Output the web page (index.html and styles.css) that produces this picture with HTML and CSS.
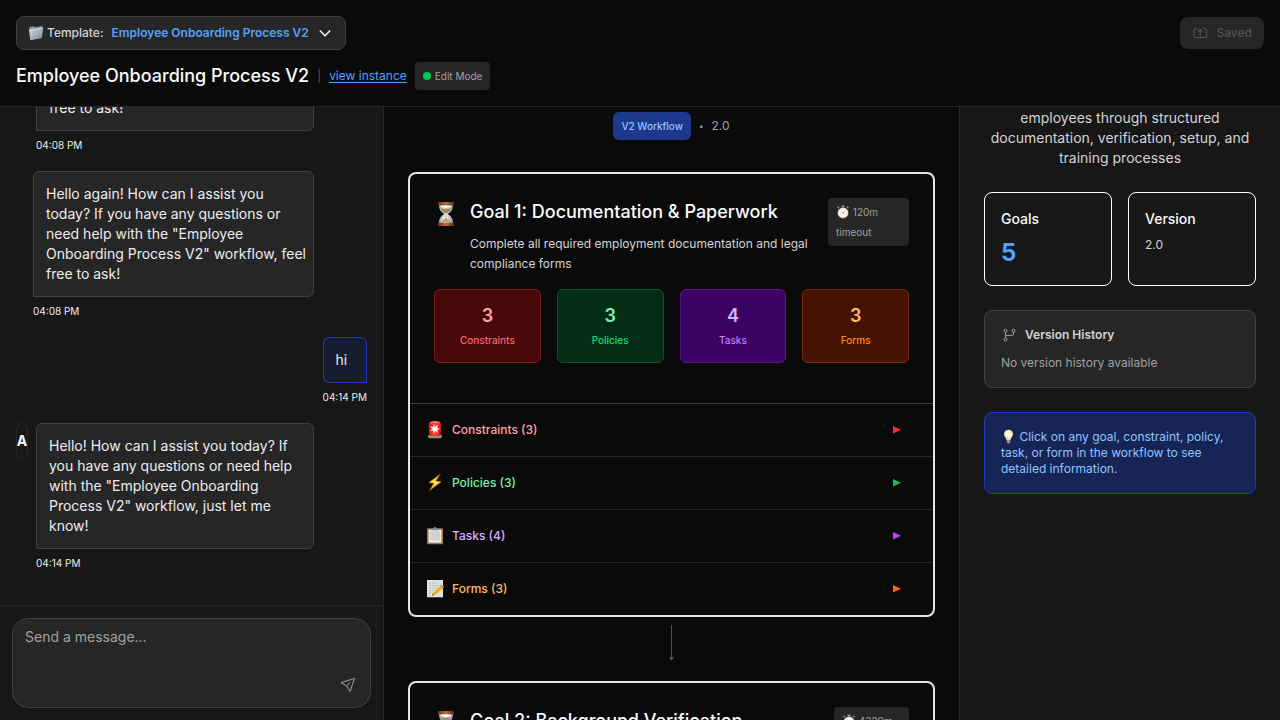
FILE: index.html
```html
<!DOCTYPE html>
<html lang="en">
<head>
<meta charset="utf-8">
<title>Employee Onboarding Process V2</title>
<link rel="stylesheet" href="styles.css">
</head>
<body>
<svg class="defs" aria-hidden="true">
  <defs>
    <linearGradient id="g-folder" x1="0" y1="0" x2="1" y2="1"><stop offset="0" stop-color="#d5dade"/><stop offset="1" stop-color="#7f878e"/></linearGradient>
    <linearGradient id="g-wood" x1="0" x2="1"><stop offset="0" stop-color="#6b341a"/><stop offset=".5" stop-color="#c06a38"/><stop offset="1" stop-color="#5b2b16"/></linearGradient>
    <linearGradient id="g-glass" x1="0" x2="1"><stop offset="0" stop-color="#8fa0b5"/><stop offset=".5" stop-color="#fff"/><stop offset="1" stop-color="#8492a6"/></linearGradient>
    <linearGradient id="g-red" x1="0" x2="1"><stop offset="0" stop-color="#c3161a"/><stop offset=".5" stop-color="#ff4a3d"/><stop offset="1" stop-color="#b90f16"/></linearGradient>
    <linearGradient id="g-bolt" x1="0" y1="0" x2="0" y2="1"><stop offset="0" stop-color="#f79a00"/><stop offset=".5" stop-color="#ffe14a"/><stop offset="1" stop-color="#f08a00"/></linearGradient>
    <radialGradient id="g-bulb"><stop offset="0" stop-color="#fff"/><stop offset=".6" stop-color="#fff8d0"/><stop offset="1" stop-color="#eadf9b"/></radialGradient>
    <symbol id="folder" viewBox="0 0 16 16">
      <path d="M.2 3.200.8 2l4.600-.7 1 .9L13.400 1l.3 1.600-1.200 10.200L1.200 15z" fill="#8f979d"/>
      <path d="M0 5.200 14.200 3l-1.300 10.100L1.500 15.200z" fill="url(#g-folder)"/>
      <path d="M0 5.200 14.200 3" stroke="#f2f4f5" stroke-width=".6"/>
    </symbol>
    <symbol id="hourglass" viewBox="0 0 24 24">
      <path d="M5 3h14c0 5-2 7-5.600 9 3.600 2 5.600 4 5.600 9H5c0-5 2-7 5.600-9C7 10 5 8 5 3z" fill="url(#g-glass)"/>
      <path d="M6.500 6.500h11c-.6 2.200-2.300 3.800-5.500 5-3.200-1.200-4.900-2.800-5.500-5z" fill="#a58a68"/>
      <path d="M11.600 11h.8v5l4.600 4.600H7l4.600-4.600z" fill="#c7a068"/>
      <path d="M7 4.500h10" stroke="#fff" stroke-width="1"/>
      <rect x="4" y="0" width="16" height="3.200" rx=".6" fill="url(#g-wood)"/>
      <rect x="4" y="20.800" width="16" height="3.200" rx=".6" fill="url(#g-wood)"/>
    </symbol>
    <symbol id="siren" viewBox="0 0 18 18">
      <path d="M2.500 14h13l.6 2-1.600 1.300h-11L1.900 16z" fill="#8e9698"/>
      <path d="M3.200 14.300 2.600 4C3 .8 5 0 9 0s6 .8 6.400 4l-.6 10.300c-2 1.500-9.600 1.500-11.600 0z" fill="url(#g-red)"/>
      <path d="M4.500 2c2-1.300 7-1.300 9 0" stroke="#ff9c8e" stroke-width="1" fill="none"/>
      <path d="m8 3 .9 3L12 3.800 11.200 7l3 .9-3.100 1 1 3L9.400 10l-1.700 2.500-.5-3-3.300.5 2.300-2.100-2-2.500 3 .5z" fill="#fff0e8"/>
    </symbol>
    <symbol id="bolt" viewBox="0 0 18 18">
      <path d="M14.500 0 2.800 8.600l4.900.7L3.400 16.800l11.800-9-5.300-.8z" fill="url(#g-bolt)" stroke="#c56e00" stroke-width=".4"/>
    </symbol>
    <symbol id="clipboard" viewBox="0 0 18 18">
      <rect x="1" y="1.300" width="16" height="16" rx=".8" fill="#9b774c"/>
      <rect x="2.600" y="2.500" width="12.800" height="13.200" fill="#e9eaeb"/>
      <rect x="4.200" y="4.300" width="9.600" height="9" fill="#cfd1d4"/>
      <path d="M4.800 3.200V1.500h2.700c.3-1.900 2.700-1.900 3 0h2.700v1.700z" fill="#868b91"/>
    </symbol>
    <symbol id="memo" viewBox="0 0 18 18">
      <rect x="1" y="0" width="16" height="17.300" fill="#dedfe0"/>
      <path d="M3 3h9M3 5.500h10M3 8h8M3 10.500h5M3 13h4" stroke="#b0b3b5" stroke-width=".8" stroke-dasharray="2 .7"/>
      <path d="m6 15.800 1.100-3.800 6.700-6.100 2.800 2.900-6.900 6z" fill="#f6c02c"/>
      <path d="m8.400 13.800 6.800-6.300" stroke="#d8941c" stroke-width="1"/>
      <path d="m13.800 5.900 1.500-1.100c1.200-.4 2.900 1.200 2.500 2.500l-1.200 1.500z" fill="#ee7e7d"/>
      <path d="m6 15.800.5-1.700 1.400 1z" fill="#444"/>
    </symbol>
    <symbol id="stopwatch" viewBox="0 0 14 14">
      <path d="M5.600.5h2.800v2H5.600zM10.500 2.300l1-1 1.400 1.400-1 1zM3.500 2.300l-1-1-1.400 1.400 1 1z" fill="#8c939e"/>
      <circle cx="7" cy="7.900" r="5.500" fill="#9ea4ad"/>
      <circle cx="7" cy="7.900" r="4.900" fill="#f4f1ed"/>
      <path d="M7 7.900 8.900 6" stroke="#e0713c" stroke-width=".6"/>
      <circle cx="7" cy="7.900" r=".6" fill="#d4653a"/>
    </symbol>
    <symbol id="bulb" viewBox="0 0 15 15">
      <path d="M7.500.8C4.800.8 3 2.700 3 5.100c0 2.300 2 3.500 2.600 6h3.800c.6-2.500 2.600-3.700 2.600-6C12 2.700 10.200.8 7.500.8z" fill="url(#g-bulb)"/>
      <path d="M5.700 11h3.600l-.4 2.900-1.400.7-1.400-.7z" fill="#9c9686"/>
      <path d="M6.800 10.800 6.200 7h2.600l-.6 3.800" stroke="#e8cc76" stroke-width=".5" fill="none"/>
    </symbol>
  </defs>
</svg>

<div class="app">
  <header class="header">
    <div class="header-row">
      <button class="template" type="button" aria-haspopup="listbox">
        <span class="template-label"><svg class="i16"><use href="#folder"/></svg>Template:</span>
        <span class="template-name">Employee Onboarding Process V2</span>
        <svg class="i16" viewBox="0 0 16 16"><path d="m2.800 5.500 5.200 5.200 5.200-5.200" fill="none" stroke="#fff" stroke-width="1.400"/></svg>
      </button>
      <button class="saved" type="button" disabled>
        <svg class="i16" viewBox="0 0 16 16" fill="none" stroke="currentColor" stroke-width="1.200"><path d="M5.500 3.700H3.200c-.8 0-1.200.4-1.200 1.200v6.600c0 .8.400 1.200 1.200 1.200h10.100c.8 0 1.200-.4 1.200-1.200V4.900c0-.8-.4-1.200-1.200-1.200H11M8.200 12.500V4.500M6 6.500l2.200-2.200 2.200 2.200"/></svg>
        Saved
      </button>
    </div>
    <div class="title-row">
      <h1>Employee Onboarding Process V2</h1>
      <span class="divider">|</span>
      <a href="#instance">view instance</a>
      <span class="mode"><span class="dot"></span>Edit Mode</span>
    </div>
  </header>

  <main class="columns">
    <section class="chat" aria-label="Chat">
      <div class="messages">
        <div class="message">
          <span class="avatar blank wide"></span>
          <div class="body"><p class="bubble">free to ask!</p><time>04:08 PM</time></div>
        </div>
        <div class="message">
          <span class="avatar blank"></span>
          <div class="body"><p class="bubble">Hello again! How can I assist you today? If you have any questions or need help with the "Employee Onboarding Process V2" workflow, feel free to ask!</p><time>04:08 PM</time></div>
        </div>
        <div class="message mine">
          <div class="body"><p class="bubble">hi</p><time>04:14 PM</time></div>
        </div>
        <div class="message">
          <span class="avatar wide">A</span>
          <div class="body"><p class="bubble">Hello! How can I assist you today? If you have any questions or need help with the "Employee Onboarding Process V2" workflow, just let me know!</p><time>04:14 PM</time></div>
        </div>
      </div>
      <form class="composer">
        <div class="composer-box">
          <textarea aria-label="Message" placeholder="Send a message..."></textarea>
          <button type="button" aria-label="Send"><svg class="i16" viewBox="0 0 16 16" fill="none" stroke="currentColor" stroke-linejoin="round"><path d="M14.500 1.500 1 5.600l5.600 3.200 3.500 5.700zM6.600 8.800l3.200-2.900"/></svg></button>
        </div>
      </form>
    </section>

    <section class="workflow" aria-label="Workflow">
      <div class="meta"><span class="badge">V2 Workflow</span><span class="bullet">•</span><span>2.0</span></div>
      <article class="goal">
        <div class="goal-main">
          <div class="goal-head">
            <svg class="i24"><use href="#hourglass"/></svg>
            <div class="goal-text">
              <h2>Goal 1: Documentation &amp; Paperwork</h2>
              <p>Complete all required employment documentation and legal compliance forms</p>
            </div>
            <span class="timeout"><svg class="i14"><use href="#stopwatch"/></svg> 120m timeout</span>
          </div>
          <div class="stats">
            <div class="stat red"><strong>3</strong><span>Constraints</span></div>
            <div class="stat green"><strong>3</strong><span>Policies</span></div>
            <div class="stat purple"><strong>4</strong><span>Tasks</span></div>
            <div class="stat orange"><strong>3</strong><span>Forms</span></div>
          </div>
        </div>
        <div class="sections">
          <button class="section red" type="button"><svg class="i18"><use href="#siren"/></svg><span>Constraints (3)</span><svg class="caret" viewBox="0 0 8 8"><path d="M0 0v7.500l8-3.800z"/></svg></button>
          <button class="section green" type="button"><svg class="i18"><use href="#bolt"/></svg><span>Policies (3)</span><svg class="caret" viewBox="0 0 8 8"><path d="M0 0v7.500l8-3.800z"/></svg></button>
          <button class="section purple" type="button"><svg class="i18"><use href="#clipboard"/></svg><span>Tasks (4)</span><svg class="caret" viewBox="0 0 8 8"><path d="M0 0v7.500l8-3.800z"/></svg></button>
          <button class="section orange" type="button"><svg class="i18"><use href="#memo"/></svg><span>Forms (3)</span><svg class="caret" viewBox="0 0 8 8"><path d="M0 0v7.500l8-3.800z"/></svg></button>
        </div>
      </article>
      <div class="connector"><svg viewBox="0 0 5 36"><path d="M2 0h1v32H2zM0 32h5l-2.500 4z"/></svg></div>
      <article class="goal">
        <div class="goal-main">
          <div class="goal-head">
            <svg class="i24"><use href="#hourglass"/></svg>
            <div class="goal-text"><h2>Goal 2: Background Verification</h2></div>
            <span class="timeout narrow"><svg class="i14"><use href="#stopwatch"/></svg> 4320m timeout</span>
          </div>
        </div>
      </article>
    </section>

    <aside class="details">
      <p class="summary">employees through structured documentation, verification, setup, and training processes</p>
      <div class="facts">
        <div class="fact"><h3>Goals</h3><strong>5</strong></div>
        <div class="fact"><h3>Version</h3><span>2.0</span></div>
      </div>
      <div class="history">
        <h3><svg class="i16" viewBox="0 0 16 16" fill="none" stroke="currentColor"><circle cx="4.500" cy="3.800" r="1.500"/><circle cx="12.500" cy="3.800" r="1.500"/><circle cx="4.500" cy="12.500" r="1.500"/><path d="M4.500 5.300V11M12.500 5.300v1.900c0 .8-.4 1.200-1.200 1.200H4.500"/></svg>Version History</h3>
        <p>No version history available</p>
      </div>
      <p class="tip"><svg class="i15"><use href="#bulb"/></svg> Click on any goal, constraint, policy, task, or form in the workflow to see detailed information.</p>
    </aside>
  </main>
</div>
</body>
</html>
```
FILE: styles.css
```css
* { box-sizing: border-box; margin: 0; }
body { background: #0a0a0a; color: #ededed; font: 14px/20px Inter, "Liberation Sans", sans-serif; }
button, textarea { font: inherit; color: inherit; background: none; border: 0; padding: 0; }
svg { flex: none; }
.defs { position: absolute; width: 0; height: 0; }
.i14 { width: 14px; height: 14px; }
.i15 { width: 15px; height: 15px; }
.i16 { width: 16px; height: 16px; }
.i18 { width: 18px; height: 18px; }
.i24 { width: 24px; height: 24px; }

.app { display: flex; flex-direction: column; height: 100vh; overflow: hidden; }
.header { display: flex; flex-direction: column; gap: 12px; padding: 16px; border-bottom: 1px solid #262626; }
.header-row { display: flex; justify-content: space-between; align-items: center; }
.template { display: flex; align-items: center; gap: 8px; height: 34px; padding: 0 12px; border: 1px solid #404040; border-radius: 8px; background: #262626; font-size: 12px; font-weight: 500; }
.template-label { display: flex; align-items: center; gap: 2px; color: #d4d4d4; }
.template-name { color: #51a2ff; font-weight: 600; }
.saved { display: flex; align-items: center; gap: 8px; height: 32px; padding: 0 12px; border-radius: 8px; background: #262626; color: #525252; font-size: 12px; font-weight: 500; }
.title-row { display: flex; align-items: center; gap: 8px; height: 28px; }
h1 { font-size: 18px; line-height: 28px; font-weight: 500; color: #fafafa; }
.divider { color: #525252; font-size: 12px; }
.title-row a { color: #51a2ff; font-size: 12px; text-underline-offset: 2px; }
.mode { display: flex; align-items: center; gap: 4px; padding: 4px 8px; border-radius: 4px; background: #262626; color: #a1a1a1; font-size: 10px; }
.dot { width: 8px; height: 8px; border-radius: 50%; background: #00c950; }

.columns { display: grid; grid-template-columns: 30% 45% 25%; flex: 1; min-height: 0; }
.chat { display: flex; flex-direction: column; min-height: 0; border-right: 1px solid #262626; background: #171717; }
.messages { display: flex; flex-direction: column; justify-content: flex-end; gap: 16px; flex: 1; min-height: 0; padding: 0 16px 32px; overflow: hidden; }
.message { display: flex; gap: 8px; width: 85%; }
.avatar { flex: none; width: 9px; height: 36px; border: 1px solid #262626; border-radius: 6px; display: flex; align-items: center; justify-content: center; font-weight: 700; color: #fff; }
.avatar.wide { width: 12px; }
.avatar.blank { visibility: hidden; }
.body { display: flex; flex-direction: column; gap: 4px; flex: 1; }
.bubble { padding: 12px 6px 12px 12px; border: 1px solid #404040; border-radius: 6px 6px 6px 0; background: #262626; }
.mine { align-self: flex-end; justify-content: flex-end; }
.mine .body { flex: none; align-items: flex-end; }
.mine .bubble { width: 100%; border-color: #193cb8; border-radius: 6px 6px 0 6px; background: #171c2e; }
time { font-size: 10px; }
.composer { padding: 12px; border-top: 1px solid #262626; }
.composer-box { display: flex; align-items: flex-end; height: 90px; padding: 8px 14px 14px 12px; border: 1px solid #404040; border-radius: 16px; background: #262626; }
.composer textarea { flex: 1; align-self: stretch; resize: none; outline: 0; }
.composer textarea::placeholder { color: #a1a1a1; }
.composer button { display: flex; color: #a1a1a1; }

.workflow { padding: 5px 24px 0; border-right: 1px solid #262626; overflow: hidden; }
.meta { display: flex; justify-content: center; align-items: center; gap: 8px; margin-bottom: 32px; color: #a1a1a1; font-size: 12px; }
.badge { padding: 4px 8px; border-radius: 6px; background: #1c398e; color: #8ec5ff; font-size: 10px; font-weight: 500; }
.bullet { font-size: 8px; }
.goal { border: 2px solid #e5e5e5; border-radius: 8px; }
.goal-main { padding: 24px 24px 40px; }
.goal-head { display: flex; align-items: flex-start; gap: 12px; margin-bottom: 15px; }
.goal-head .i24 { margin-top: 4px; }
.goal-text { flex: 1; }
h2 { font-size: 18px; line-height: 28px; font-weight: 500; color: #fafafa; }
.goal-text p { margin-top: 8px; color: #d4d4d4; font-size: 12px; }
.timeout { width: 81px; padding: 4px 8px; border-radius: 4px; background: #262626; color: #a1a1a1; font-size: 10px; }
.timeout.narrow { width: 75px; }
.timeout svg, .tip svg { vertical-align: -3px; }
.stats { display: grid; grid-template-columns: repeat(4, 1fr); gap: 16px; }
.stat { display: flex; flex-direction: column; align-items: center; padding: 12px; border: 1px solid; border-radius: 6px; }
.stat strong { font-size: 18px; line-height: 28px; font-weight: 600; }
.stat span { font-size: 10px; font-weight: 500; }
.stat.red { background: #460809; border-color: #82181a; color: #ffa2a2; }
.stat.green { background: #032e15; border-color: #0d542b; color: #7bf1a8; }
.stat.purple { background: #3c0366; border-color: #59168b; color: #dab2ff; }
.stat.orange { background: #441306; border-color: #7e2a0c; color: #ffb86a; }
.stat.red span { color: #ff6467; }
.stat.green span { color: #05df72; }
.stat.purple span { color: #c27aff; }
.stat.orange span { color: #ff8904; }
.section { display: flex; align-items: center; gap: 8px; width: 100%; height: 53px; padding: 0 32px 0 16px; border-top: 1px solid #262626; font-size: 12px; font-weight: 500; text-align: left; }
.section:first-child { border-color: #404040; }
.section span { flex: 1; }
.section.red { color: #ffa2a2; }
.section.green { color: #7bf1a8; }
.section.purple { color: #dab2ff; }
.section.orange { color: #ffb86a; }
.caret { width: 8px; height: 8px; }
.red .caret { fill: #fb2c36; }
.green .caret { fill: #00c950; }
.purple .caret { fill: #ad46ff; }
.orange .caret { fill: #ff6900; }
.connector { display: flex; justify-content: center; height: 64px; padding-top: 8px; }
.connector svg { width: 5px; height: 36px; fill: #525252; }

.details { display: flex; flex-direction: column; gap: 24px; padding: 1px 24px 0; background: #171717; overflow: hidden; }
.summary { color: #d4d4d4; text-align: center; }
.facts { display: grid; grid-template-columns: 1fr 1fr; gap: 16px; }
.fact { display: flex; flex-direction: column; gap: 8px; padding: 16px; border: 1px solid #fff; border-radius: 8px; }
.fact h3 { font-size: 14px; font-weight: 500; color: #fafafa; }
.fact strong { font-size: 24px; line-height: 32px; font-weight: 700; color: #51a2ff; }
.fact span { font-size: 12px; line-height: 16px; color: #d4d4d4; }
.history { padding: 16px; border: 1px solid #404040; border-radius: 8px; background: #262626; font-size: 12px; line-height: 16px; }
.history h3 { display: flex; align-items: center; gap: 8px; margin-bottom: 12px; font-size: 12px; font-weight: 600; color: #d4d4d4; }
.history h3 svg { color: #a1a1a1; }
.history p { color: #a1a1a1; }
.tip { padding: 16px; border: 1px solid #193cb8; border-radius: 8px; background: #162456; color: #8ec5ff; font-size: 12px; line-height: 16px; }
```
